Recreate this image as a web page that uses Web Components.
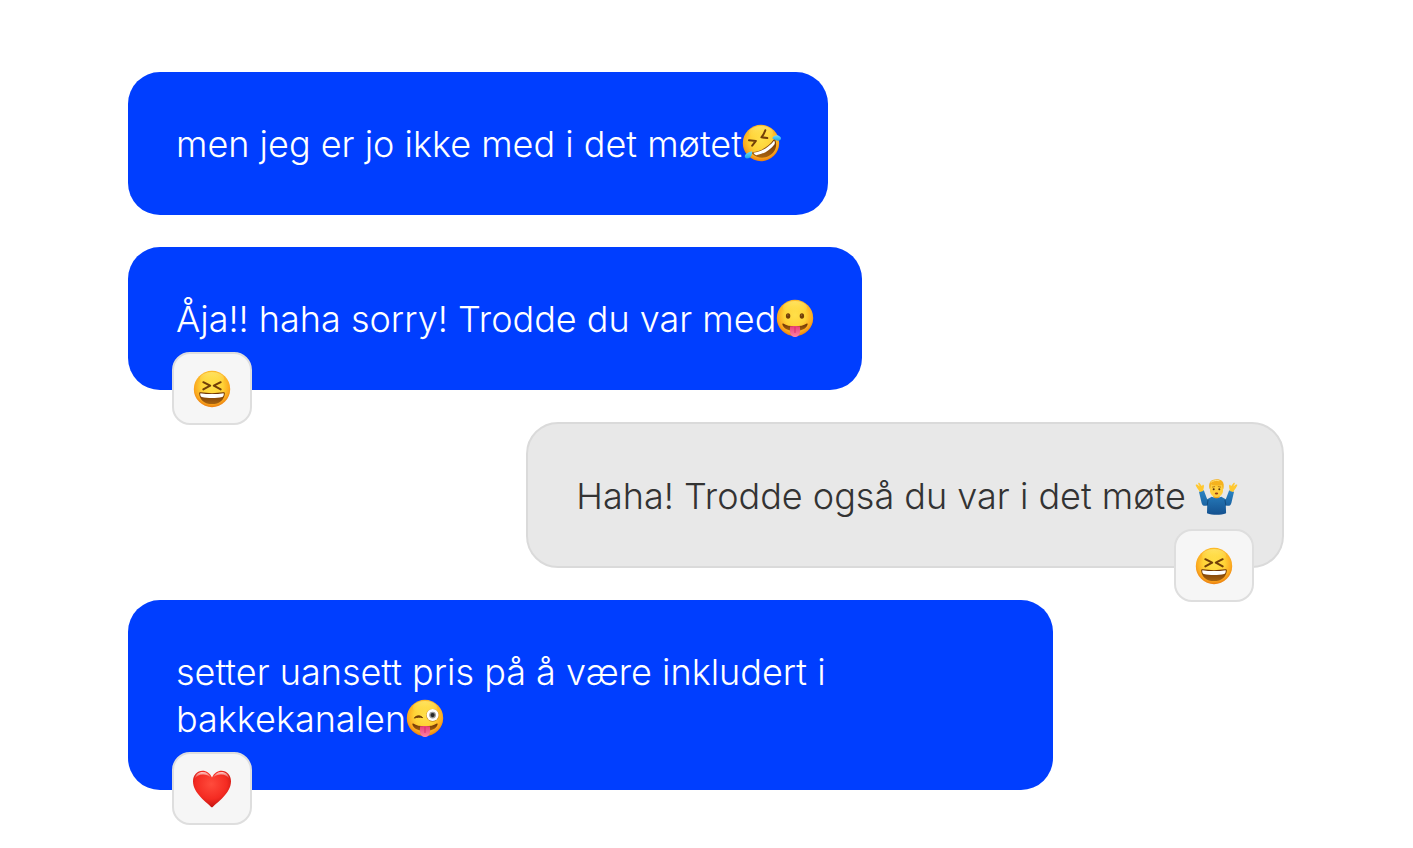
<!DOCTYPE html>
<html lang="nb">
<head>
<meta charset="utf-8">
<meta name="viewport" content="width=device-width, initial-scale=1">
<title>Chat</title>
<style>
    body {
        margin: 0;
        background: #fff;
        font-family: Inter, "Noto Sans", sans-serif;
        font-weight: 330;
    }
</style>
</head>
<body>
<chat-thread>
    <chat-bubble>men jeg er jo ikke med i det møtet<chat-emoji name="rofl"></chat-emoji></chat-bubble>
    <chat-bubble>Åja!! haha sorry! Trodde du var med<chat-emoji name="tongue"></chat-emoji><chat-reaction slot="reaction"><chat-emoji name="laugh"></chat-emoji></chat-reaction></chat-bubble>
    <chat-bubble own>Haha! Trodde også du var i det møte <chat-emoji name="shrug"></chat-emoji><chat-reaction slot="reaction"><chat-emoji name="laugh"></chat-emoji></chat-reaction></chat-bubble>
    <chat-bubble>setter uansett pris på å være inkludert i bakkekanalen<chat-emoji name="wink"></chat-emoji><chat-reaction slot="reaction"><chat-emoji name="heart"></chat-emoji></chat-reaction></chat-bubble>
</chat-thread>

<script>
    var threadTemplate = document.createElement('template');
    threadTemplate.innerHTML = `
        <style>
            :host {
                display: flex;
                flex-direction: column;
                align-items: flex-start;
                gap: 32px;
                padding: 72px 129px 56px 128px;
            }
        </style>
        <slot></slot>
    `;
    customElements.define('chat-thread', class extends HTMLElement {
        constructor() {
            super();
            this.attachShadow({mode: 'open'}).appendChild(threadTemplate.content.cloneNode(true));
        }
    });

    var bubbleTemplate = document.createElement('template');
    bubbleTemplate.innerHTML = `
        <style>
            :host {
                display: block;
                position: relative;
                box-sizing: border-box;
                max-width: 80%;
                padding: 49px 48px 47px;
                border-radius: 32px;
                background: #003eff;
                color: #fff;
                font-size: 36px;
                line-height: 47px;
            }
            :host([own]) {
                align-self: flex-end;
                padding-bottom: 46px;
                border: 2px solid #dadada;
                background: #e8e8e8;
                color: #333;
            }
            p {
                margin: 0;
            }
            ::slotted(chat-reaction) {
                position: absolute;
                left: 44px;
                bottom: -35px;
            }
            :host([own]) ::slotted(chat-reaction) {
                left: auto;
                right: 28px;
                bottom: -36px;
            }
        </style>
        <p><slot></slot></p>
        <slot name="reaction"></slot>
    `;
    customElements.define('chat-bubble', class extends HTMLElement {
        constructor() {
            super();
            this.attachShadow({mode: 'open'}).appendChild(bubbleTemplate.content.cloneNode(true));
        }
    });

    var reactionTemplate = document.createElement('template');
    reactionTemplate.innerHTML = `
        <style>
            :host {
                display: block;
            }
            button {
                display: flex;
                align-items: center;
                justify-content: center;
                width: 80px;
                height: 73px;
                padding: 0;
                border: 2px solid #dedede;
                border-radius: 18px;
                background: #f6f6f6;
            }
        </style>
        <button type="button"><slot></slot></button>
    `;
    customElements.define('chat-reaction', class extends HTMLElement {
        constructor() {
            super();
            this.attachShadow({mode: 'open'}).appendChild(reactionTemplate.content.cloneNode(true));
        }
    });

    var defs = `
        <defs>
            <radialGradient id="face" cx=".5" cy=".42" r=".6">
                <stop offset="0" stop-color="#ffe04a"/>
                <stop offset=".5" stop-color="#ffd236"/>
                <stop offset=".8" stop-color="#fba81f"/>
                <stop offset="1" stop-color="#e8760c"/>
            </radialGradient>
            <linearGradient id="shine" x1="0" y1="0" x2="0" y2="1">
                <stop offset="0" stop-color="#fff07a" stop-opacity=".7"/>
                <stop offset="1" stop-color="#ffe04a" stop-opacity="0"/>
            </linearGradient>
            <linearGradient id="mouth" x1="0" y1="0" x2="0" y2="1">
                <stop offset="0" stop-color="#6b3206"/>
                <stop offset="1" stop-color="#a86410"/>
            </linearGradient>
            <linearGradient id="tongue" x1="0" y1="0" x2="0" y2="1">
                <stop offset="0" stop-color="#e83f78"/>
                <stop offset="1" stop-color="#ff82a8"/>
            </linearGradient>
            <linearGradient id="tear" x1="0" y1="0" x2="0" y2="1">
                <stop offset="0" stop-color="#6fdcfa"/>
                <stop offset="1" stop-color="#1ba6ea"/>
            </linearGradient>
            <radialGradient id="heart" cx=".48" cy=".36" r=".68">
                <stop offset="0" stop-color="#ff4b3c"/>
                <stop offset=".6" stop-color="#f42b22"/>
                <stop offset="1" stop-color="#b80f0c"/>
            </radialGradient>
            <linearGradient id="gloss" x1="0" y1="0" x2="0" y2="1">
                <stop offset="0" stop-color="#fff" stop-opacity=".75"/>
                <stop offset="1" stop-color="#fff" stop-opacity="0"/>
            </linearGradient>
            <linearGradient id="sweater" x1="0" y1="0" x2="0" y2="1">
                <stop offset="0" stop-color="#2a84c4"/>
                <stop offset="1" stop-color="#14518f"/>
            </linearGradient>
        </defs>
    `;
    var face = `
        <circle cx="19" cy="19" r="18.2" fill="url(#face)"/>
        <ellipse cx="19" cy="8.5" rx="12" ry="6.5" fill="url(#shine)"/>
    `;
    var tongueMouth = `
        <path d="M7.6 24.7C10 26.4 14 27.2 19 27.2s9-.8 11.4-2.5c.7-.5 1.4 0 1.2.8C30.5 29.8 25.5 32 19 32S7.5 29.8 6.4 25.5c-.2-.8.5-1.3 1.2-.8z" fill="url(#mouth)"/>
        <path d="M14 27.6c1.6-.7 8.4-.7 10 0v5c0 7.3-10 7.3-10 0z" fill="url(#tongue)"/>
        <path d="M19 28.5v5" stroke="#d92f68" stroke-width="1" stroke-linecap="round"/>
    `;
    var drawings = {
        laugh: {
            label: 'ler',
            svg: face + `
                <path d="M10.3 12.2l6.9 3.5-6.9 3.7M27.7 12.2l-6.9 3.5 6.9 3.7" fill="none" stroke="#713e08" stroke-width="2" stroke-linecap="round" stroke-linejoin="round"/>
                <path d="M6.2 23.4c0-.9.6-1.3 1.5-1.1 7 1.1 15.6 1.1 22.6 0 .9-.2 1.5.2 1.5 1.1-.3 6.4-5.6 10.7-12.8 10.7S6.5 29.8 6.2 23.4z" fill="url(#mouth)"/>
                <path d="M7.3 23.2c7.3 1.2 16.1 1.2 23.4 0 .3 1.7-.2 3.2-1.5 3.7-5.8 1.5-14.6 1.5-20.4 0-1.300-.5-1.800-2-1.500-3.700z" fill="#fff"/>
            `
        },
        rofl: {
            label: 'ler så tårene triller',
            svg: face + `
                <path d="M7 16.300l6.900.6-3.700 4.700M23.300 6.300c-1 2.700-2.300 5-3.900 7l5.900.8" fill="none" stroke="#713e08" stroke-width="2" stroke-linecap="round" stroke-linejoin="round"/>
                <path d="M10.800 28.200C18.500 27.500 27 22.500 31.500 15.800c.6-.8 1.400-.7 1.800.2 2.500 6.300-.6 13-6.500 16.100-5.600 2.800-12.200 1.700-16.500-2.400-.7-.7-.4-1.400.5-1.500z" fill="url(#mouth)"/>
                <path d="M11.500 28.800c7.800-.9 15.900-5.700 20.700-12.200.8 1.500.9 2.700.2 3.800-4.500 5.700-10.500 9.500-17.400 10.700-1.300.2-2.700-.8-3.500-2.300z" fill="#fff"/>
                <path d="M30.200 14.200c1.200-2.500 4-3.500 6.500-2.500 2.400.9 3 3.300 1.500 4.400-1.800 1.300-4.800.3-8-1.900z" fill="url(#tear)"/>
                <path d="M9.900 27.200c.7 3.100-.7 6.200-3.500 7.100-2.500.7-4.300-1-3.400-3 .9-2 3.500-2.900 6.900-4.100z" fill="url(#tear)"/>
            `
        },
        tongue: {
            label: 'rekker tunge',
            svg: face + `
                <ellipse cx="12.1" cy="17" rx="2.2" ry="2.8" fill="#713e08"/>
                <ellipse cx="25.9" cy="17" rx="2.2" ry="2.8" fill="#713e08"/>
                <circle cx="11.8" cy="16" r=".6" fill="#b28640"/>
                <circle cx="25.6" cy="16" r=".6" fill="#b28640"/>
            ` + tongueMouth
        },
        wink: {
            label: 'blunker og rekker tunge',
            svg: face + `
                <path d="M8.300 19.100c1.900-2.700 5.600-3.100 8.300-.5-2.900-.7-5.300-.5-8.300.5z" fill="#713e08" stroke="#713e08" stroke-width="1" stroke-linejoin="round"/>
                <circle cx="26.6" cy="16.3" r="6.4" fill="#c98b1b"/>
                <circle cx="26.6" cy="16.1" r="6" fill="#fff"/>
                <circle cx="26.6" cy="16.1" r="3.4" fill="#9a9a98"/>
                <circle cx="26.6" cy="16.1" r="2.1" fill="#27282a"/>
            ` + tongueMouth
        },
        heart: {
            label: 'hjerte',
            svg: `
                <path d="M19 37.6C14 32.5 0 23.3 0 11.2 0 5.2 4.2.8 9.5.8c4 0 7.5 2.5 9.5 6.6C21 3.3 24.5.8 28.5.8 33.8.8 38 5.2 38 11.2c0 12.1-14 21.3-19 26.4z" fill="url(#heart)"/>
                <path d="M1.8 9C2.3 4.6 5.7 2 9.6 2c3.7 0 6.6 2 8.2 5.5-2.6-2.5-5-3.1-8.2-3-3.5.1-5.9 1.5-7.8 4.500zM20.200 7.500C21.800 4 24.700 2 28.400 2c3.900 0 7.300 2.600 7.800 7-1.900-3-4.300-4.400-7.800-4.500-3.200-.1-5.600.5-8.200 3z" fill="url(#gloss)"/>
            `
        },
        shrug: {
            label: 'trekker på skuldrene',
            svg: `
                <g transform="translate(1 2.5)">
                    <path d="M2 13.200l4.800-1.400 3.400 9 4.500-2.500c3 1.200 6.600 1.200 9.600 0l4.500 2.500 3.400-9 4.800 1.400-2.600 11.300c-.7 2.800-2.900 3.500-5.600 2.300l.3 7.900c-5.600 2.100-13.500 2.100-19.100 0l.2-7.900c-2.700 1.200-4.900.5-5.600-2.300z" fill="url(#sweater)"/>
                    <path d="M10.200 26.800l.8-5M28.800 26.800l-.8-5" stroke="#104778" stroke-width=".9" stroke-linecap="round"/>
                    <path d="M2.900 13.500C1 10.700-.3 9.500-1.200 7.100c-.4-1 .4-1.500 1.300-1L2.800 8 1.300 5.500c-.4-1 .5-1.500 1.300-.8L5 7.800c.2-1.500 1.200-2 1.800-1.100.5 1-.4 3.500-.6 5.800zM36.100 13.500C38 10.700 39.300 9.500 40.200 7.100c.4-1-.4-1.500-1.300-1L36.200 8l1.500-2.500c.4-1-.5-1.500-1.300-.8L34 7.800c-.2-1.500-1.200-2-1.800-1.100-.5 1 .4 3.500.6 5.800z" fill="#ffc82f"/>
                    <path d="M16.300 15h6.400v3.400c-1.500 1.800-4.900 1.800-6.400 0z" fill="#e99d1b"/>
                    <path d="M13 6.500h13v5.800c0 3.500-3 6.300-6.500 6.300S13 15.800 13 12.300z" fill="#ffcf3d"/>
                    <path d="M12.700 10.800c-1.300-4.500-.2-8.200 3-9.400 3.500-1.200 7.400-.8 9.400 1 1.800 1.700 2.100 5 1.200 8.400-.8-1.300-1-2.800-1.300-4.400-3.200.8-7.100.8-10.900-.2-.3 1.700-.6 3.300-1.400 4.600z" fill="#f5b21d"/>
                    <path d="M14 3.700c2-1.600 4.700-2.100 8.100-1.500" fill="none" stroke="#ffe178" stroke-width="1" stroke-linecap="round"/>
                    <path d="M15.400 8.600l2.300-.5M21.300 8.100l2.300.5" stroke="#a66a0c" stroke-width=".8" stroke-linecap="round"/>
                    <circle cx="16.7" cy="10.7" r="1" fill="#53300a"/>
                    <circle cx="22.3" cy="10.7" r="1" fill="#53300a"/>
                    <ellipse cx="19.5" cy="15" rx="1.7" ry="1" fill="#9b3e16"/>
                </g>
            `
        }
    };
    customElements.define('chat-emoji', class extends HTMLElement {
        constructor() {
            super();
            this.attachShadow({mode: 'open'});
        }
        connectedCallback() {
            var drawing = drawings[this.getAttribute('name')];
            this.shadowRoot.innerHTML = `
                <style>
                    :host {
                        display: inline-block;
                        width: 38px;
                        height: 38px;
                        line-height: 0;
                        vertical-align: -5px;
                    }
                    svg {
                        display: block;
                        width: 100%;
                        height: 100%;
                        overflow: visible;
                    }
                </style>
                <svg viewBox="0 0 38 38" role="img" aria-label="${drawing.label}">${defs}${drawing.svg}</svg>
            `;
        }
    });
</script>
</body>
</html>
